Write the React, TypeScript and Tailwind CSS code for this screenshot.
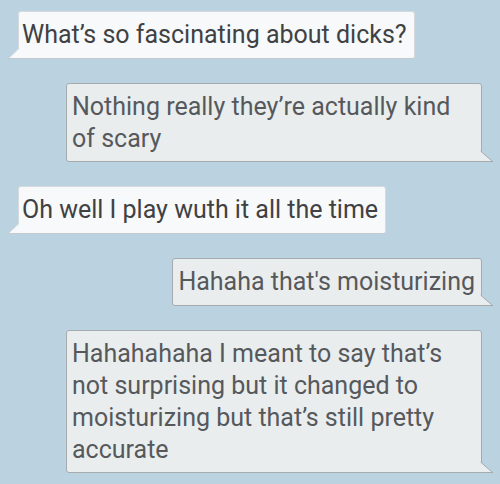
import React from "react";

function LeftTail() {
  return (
    <svg className="absolute left-[-11px] bottom-[-1px]" width="12" height="11" viewBox="0 0 12 11">
      <polygon points="11.5,0 1,10 11.5,10" fill="#f7f9fa" />
      <line x1="11.5" y1="0" x2="1" y2="10" stroke="#d6dadc" strokeWidth="1" />
      <line x1="0" y1="10.5" x2="12" y2="10.5" stroke="#c6cacc" strokeWidth="1" />
    </svg>
  );
}

function RightTail() {
  return (
    <svg className="absolute right-[-12px] bottom-[-1px]" width="13" height="11" viewBox="0 0 13 11">
      <polygon points="0.5,0 12,10 0.5,10" fill="#eaedee" />
      <line x1="0.5" y1="0" x2="12" y2="10" stroke="#a5aaac" strokeWidth="1" />
      <line x1="0" y1="10.5" x2="13" y2="10.5" stroke="#a5aaac" strokeWidth="1" />
    </svg>
  );
}

function Left({ text }: { text: string }) {
  return (
    <div className="relative self-start max-w-[416px] min-h-[48px] bg-[#f7f9fa] border border-[#d6dadc] border-b-[#c6cacc] rounded-[3px] rounded-bl-none pl-[3px] pr-[7px] pt-[7px] pb-[6px] text-[25px] leading-[32px] text-[#3f4143]">
      {text}
      <LeftTail />
    </div>
  );
}

function Right({ text }: { text: string }) {
  return (
    <div className="relative self-end max-w-[416px] min-h-[48px] bg-[#eaedee] border border-[#a5aaac] rounded-[3px] rounded-br-none pl-[5px] pr-[6px] pt-[7px] pb-[6px] text-[25px] leading-[32px] text-[#56595c]">
      {text}
      <RightTail />
    </div>
  );
}

export default function App() {
  return (
    <div
      className="w-[500px] h-[484px] overflow-hidden bg-[#bbd3e0] pt-[11px] pl-[18px] pr-[18px] flex flex-col gap-6"
      style={{ fontFamily: "Roboto, 'Noto Sans', sans-serif" }}
    >
      <Left text="What’s so fascinating about dicks?" />
      <Right text="Nothing really they’re actually kind of scary" />
      <Left text="Oh well I play wuth it all the time" />
      <Right text="Hahaha that's moisturizing" />
      <Right text="Hahahahaha I meant to say that’s not surprising but it changed to moisturizing but that’s still pretty accurate" />
    </div>
  );
}
